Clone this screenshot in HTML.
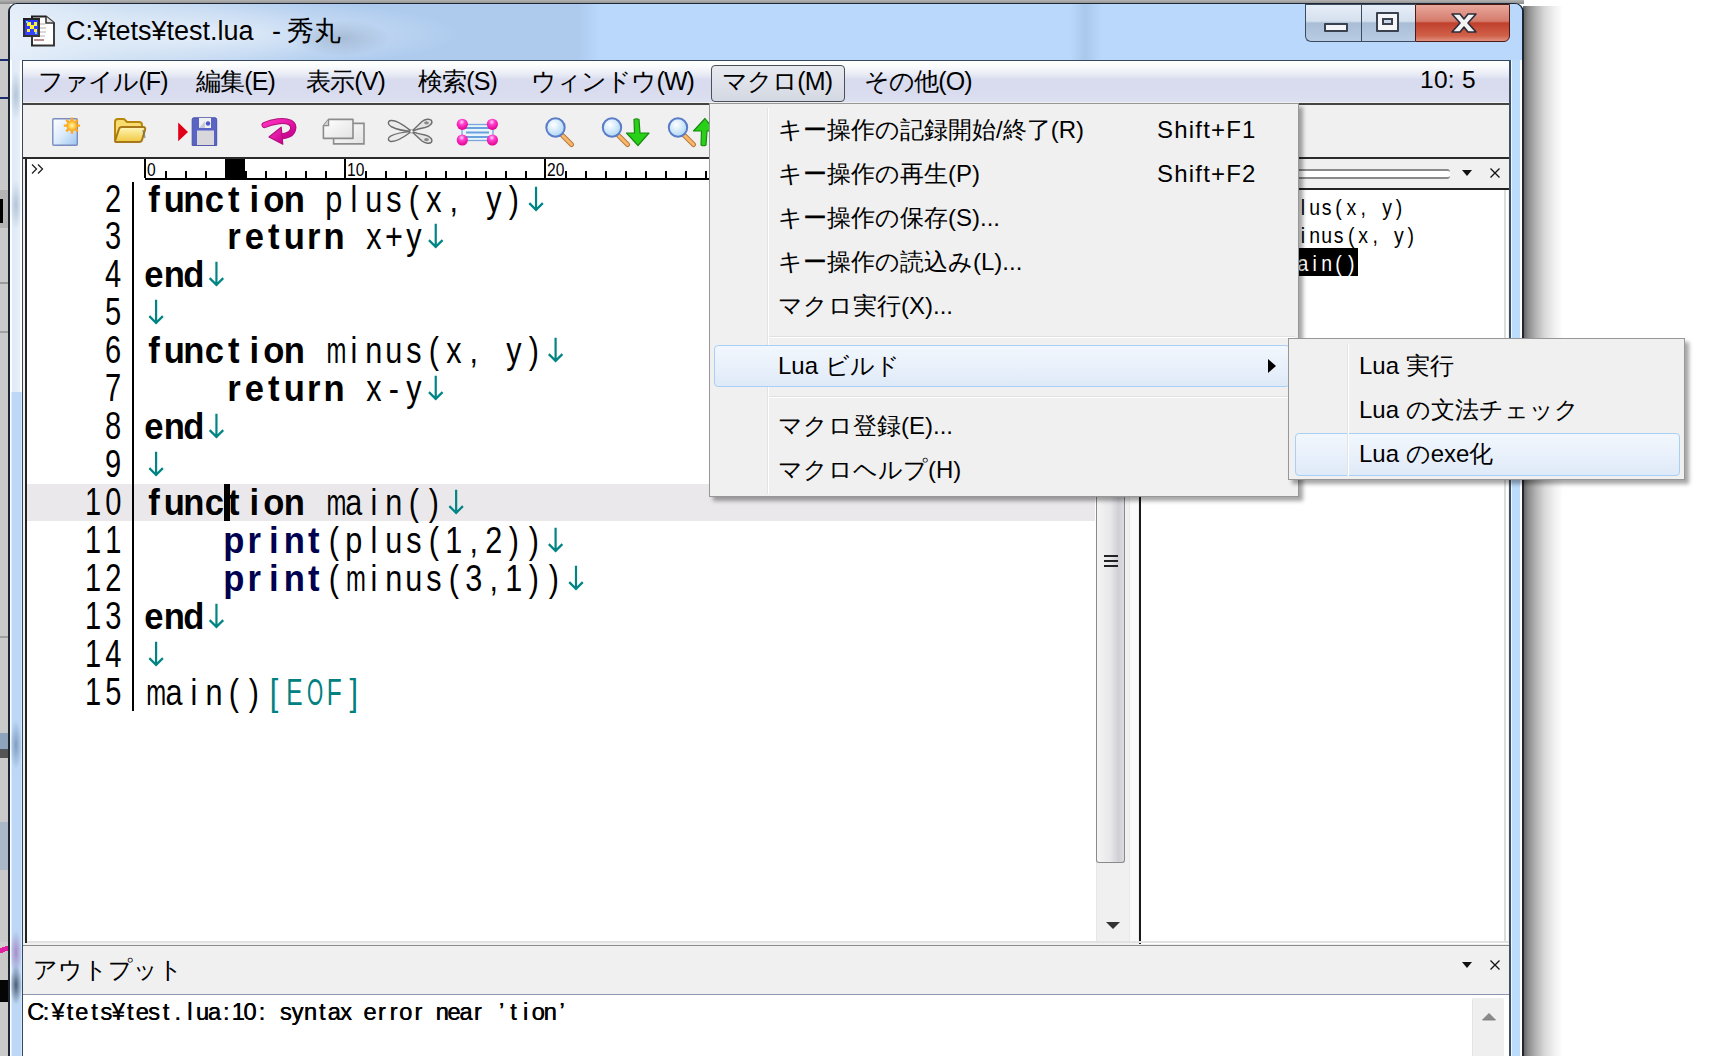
<!DOCTYPE html>
<html lang="ja">
<head>
<meta charset="utf-8">
<style>
*{margin:0;padding:0;box-sizing:border-box}
html,body{width:1730px;height:1056px;overflow:hidden;background:#fff;font-family:"Liberation Sans",sans-serif}
.a{position:absolute}
#bgleft{left:0;top:0;width:10px;height:1056px;background:#cacaca}
#bgtop{left:0;top:0;width:1524px;height:4px;background:linear-gradient(to bottom,#b4b4b4,#8a8a8a)}
#shadow{left:1523px;top:6px;width:40px;height:1056px;background:linear-gradient(to right,#5e5e5e 0px,#8a8a8a 5px,#b4b4b4 13px,#dadada 22px,#f2f2f2 32px,#fff 40px)}
#win{left:8px;top:3px;width:1516px;height:1100px;border:2px solid #1c2733;border-top-width:1px;border-radius:9px 9px 0 0;background:linear-gradient(to right,#fff 0,#fff 1px,#bcd8f6 2px,#bcd8f6 11px,#eef6ff 12px,#eef6ff 13px,#bcd8f6 13px)}
#tgrad{left:10px;top:4px;width:1512px;height:56px;border-radius:8px 8px 0 0;background:linear-gradient(to right,#e4eef9 0px,#c8dcf2 120px,#aecbee 300px,#aecbee 568px,#b9d8fb 590px,#b9d8fb 1060px,#a9c8ea 1075px,#b9d8fb 1092px,#b9d8fb 100%)}
#rglass{left:1509px;top:60px;width:13px;height:1000px;background:linear-gradient(to right,#3d5068 0,#3d5068 1.5px,#eef6ff 1.5px,#eef6ff 3px,#bcdcfc 3px,#bcdcfc 11px,#fff 11px)}
#client{left:22px;top:60px;width:1488px;height:1000px;background:#f0f0f0;border:1px solid #36485e;border-top-width:1.5px;border-bottom:none}
#menubar{left:23px;top:61px;width:1486px;height:41px;background:linear-gradient(to bottom,#ffffff 0%,#fbfcfd 12%,#e6e9f4 35%,#d8dcee 45%,#d8dcee 75%,#dde0f0 100%)}
.mi{position:absolute;top:63px;font-size:25px;line-height:36px;letter-spacing:-0.9px;color:#000;white-space:nowrap}
#mpress{left:711px;top:65px;width:134px;height:37px;border:1px solid #4a4f59;border-radius:4px;background:linear-gradient(to bottom,#e8eaf0,#d4d8e2)}
#toolbar{left:23px;top:103px;width:1486px;height:56px;background:#f0f0f0;border-top:2px solid #444;border-bottom:2px solid #2a2a2a}
#editor{left:25px;top:159px;width:1071px;height:784px;background:#fff;border-left:2px solid #222}
#ruler{left:145px;top:159px;width:951px;height:21px;border-bottom:2px solid #000}
#rcur{position:absolute;left:80px;top:0px;width:20px;height:19px;background:#000}
.tick{position:absolute;bottom:0;width:2px;background:#000}
.rnum{position:absolute;top:1px;font-family:"Liberation Sans",sans-serif;font-size:19px;line-height:19px;color:#000;transform-origin:0 0;transform:scaleX(0.82)}
#curline{left:27px;top:484px;width:1068px;height:37px;background:#ebe8eb}
#sep{left:132px;top:182px;width:2px;height:529px;background:#000}
.ln{position:absolute;left:0;width:120px;height:38px;text-align:right}
.code{position:absolute;font-family:"Liberation Sans",sans-serif;font-size:36px;line-height:38px;white-space:pre;transform-origin:0 0;transform:scaleX(0.85)}
.code i,.lnum i{display:inline-block;width:23.53px;text-align:center;font-style:normal}
.code i.ar{height:38px;vertical-align:top}
.code i.ar svg{display:block}
.lnum{position:absolute;font-family:"Liberation Sans",sans-serif;font-size:38px;line-height:38px;white-space:pre;transform-origin:0 0;transform:scaleX(0.85)}
.b{font-weight:bold}
.b i,.p i{transform:scaleX(1.13)}
.t{color:#008080}
.p{color:#000050;font-weight:bold}
#scroll{left:1096px;top:497px;width:34px;height:446px;background:#f0f0f0;border-left:1px solid #e6e6e6}
#thumb{left:1096px;top:497px;width:29px;height:366px;border:1px solid #8a8a8a;border-top:none;border-radius:0 0 3px 3px;background:linear-gradient(to right,#f4f4f4,#e8e8ea 50%,#cfcfd6 80%,#dcdce0)}
#rpane{left:1139px;top:159px;width:369px;height:785px;background:#fff;border-left:2px solid #1a1a1a}
#rhead{left:1141px;top:159px;width:368px;height:31px;background:#f0f0f0;border-bottom:2px solid #222}
#outhead{left:23px;top:945px;width:1486px;height:50px;background:#f0f0f0;border-top:1.5px solid #8a8a8a;border-bottom:1.5px solid #8c94b0}
#outbody{left:23px;top:995px;width:1486px;height:70px;background:#fff}
.popup{background:#f0f0f0;border:1px solid #979797;box-shadow:4px 4px 4px rgba(0,0,0,.35)}
.pt{position:absolute;font-size:24px;line-height:30px;margin-top:-0.5px;white-space:nowrap;color:#000}
.hl{position:absolute;border:1px solid #a8d0f6;border-radius:4px;background:linear-gradient(to bottom,#f2f7fd,#dfeaf8)}#ttext2{left:272px;top:15px;font-size:27px;line-height:32px;color:#000;white-space:nowrap;word-spacing:-1px}
#ticon{left:23px;top:15px;width:34px;height:32px}
#ttext{left:66px;top:15px;font-size:27px;line-height:32px;color:#000;white-space:nowrap}
#bmin{left:1305px;top:4px;width:56px;height:38px;border:1px solid #3b4a5e;border-right:none;border-radius:0 0 0 6px;background:linear-gradient(to bottom,#e6eef8 0%,#d5e0ee 45%,#a9bed6 50%,#b8cde4 100%)}
#bmax{left:1361px;top:4px;width:54px;height:38px;border:1px solid #3b4a5e;border-right:none;background:linear-gradient(to bottom,#e6eef8 0%,#d5e0ee 45%,#a9bed6 50%,#b8cde4 100%)}
#bclose{left:1415px;top:4px;width:95px;height:38px;border:1px solid #4a1a14;border-radius:0 0 6px 0;background:linear-gradient(to bottom,#e8a89c 0%,#d47b6c 45%,#c0402c 50%,#d06048 85%,#e09080 100%)}
#caret{left:224px;top:484px;width:6px;height:37px;background:#000}
.rl{position:absolute;left:1177px;font-family:"Liberation Sans",sans-serif;font-size:22px;line-height:28px;white-space:pre;transform-origin:0 0;transform:scaleX(0.85)}
.rl i,#outtext i{display:inline-block;width:14.118px;text-align:center;font-style:normal;transform:scaleX(1.18)}
.rl i{transform:scaleX(1.04)}
#outtitle{left:33px;top:953px;font-size:24px;line-height:34px;white-space:nowrap}
#outtext{text-shadow:0.5px 0 0 #000;left:28px;top:995px;font-family:"Liberation Sans",sans-serif;font-size:23.5px;line-height:34px;white-space:pre;transform-origin:0 0;transform:scaleX(0.85)}
#pop1{left:709px;top:103px;width:590px;height:394px}
#pop2{left:1288px;top:338px;width:397px;height:142px}

.code i.n1,.rl i.n1,#outtext i.n1{transform:scaleX(0.78)}
.code i.n2{transform:scaleX(0.68)}
.code i.n3{transform:scaleX(0.8)}
.lnum i{transform:scaleX(0.9)}

</style>
</head>
<body>
<div id="bgleft" class="a"></div>
<div id="bgtop" class="a"></div>
<div id="shadow" class="a"></div>
<div id="win" class="a"></div>
<div id="tgrad" class="a"></div>
<div id="ticon" class="a"><svg width="34" height="32" viewBox="0 0 34 32">
<path d="M9 1.5 H23 L31 8 V30.5 H9 Z" fill="#fff" stroke="#000" stroke-width="2"/>
<path d="M23 1.5 V8 H31" fill="#ddd" stroke="#000" stroke-width="1.5"/>
<path d="M14 9h8M14 13h9M14 17h9M14 21h8" stroke="#999" stroke-width="1"/>
<path d="M11 25h10" stroke="#722" stroke-width="1.3"/>
<rect x="1" y="4" width="15" height="17" fill="#0010ff" stroke="#000" stroke-width="2"/>
<path d="M4 7h4v3h3v-3h3v4h-3v3h3v3h-3v-3h-4v3h-3v-3h3v-3h-3z" fill="#ffee00"/>
<rect x="3" y="6" width="2" height="2" fill="#5cf"/><rect x="12" y="17" width="2" height="2" fill="#5cf"/>
</svg></div>
<div class="a" style="left:10px;top:4px;width:600px;height:56px;background:radial-gradient(ellipse 260px 36px at 190px 30px,rgba(255,255,255,.6),rgba(255,255,255,0))"></div>
<div class="a" style="left:280px;top:10px;width:120px;height:48px;background:radial-gradient(ellipse 50px 18px at 60px 28px,rgba(90,110,140,.28),rgba(90,110,140,0))"></div>
<div id="ttext" class="a">C:¥tets¥test.lua</div>
<div id="ttext2" class="a">- 秀丸</div>
<div id="tbtns" class="a">
 <div id="bmin" class="a"><div class="a" style="left:18px;top:18px;width:24px;height:9px;border:2px solid #3a4250;background:#f4f6f9;border-radius:1px"></div></div>
 <div id="bmax" class="a"><div class="a" style="left:14px;top:7px;width:23px;height:20px;border:2px solid #3a4250;background:#f4f6f9;border-radius:1px"><div class="a" style="left:4px;top:4px;width:11px;height:7px;border:2px solid #3a4250;background:#c8d6e8"></div></div></div>
 <div id="bclose" class="a"><svg class="a" style="left:33px;top:6px" width="30" height="24" viewBox="0 0 30 24"><path d="M3 3 L11 3 L15 8 L19 3 L27 3 L19 12 L27 21 L19 21 L15 16 L11 21 L3 21 L11 12 Z" fill="#f3f3f3" stroke="#2c2c3a" stroke-width="1.6" stroke-linejoin="round"/></svg></div>
</div>
<div class="a" style="left:0;top:59px;width:8px;height:2px;background:#1c2c70"></div>
<div class="a" style="left:0;top:97px;width:8px;height:2px;background:#1c2c70"></div>
<div class="a" style="left:0;top:190px;width:8px;height:38px;background:#b4b4b4"></div>
<div class="a" style="left:0;top:199px;width:3px;height:24px;background:#000"></div>
<div class="a" style="left:0;top:282px;width:8px;height:2px;background:#9a9a9a"></div>
<div class="a" style="left:0;top:331px;width:8px;height:2px;background:#a0a0a0"></div>
<div class="a" style="left:0;top:636px;width:8px;height:2px;background:#a0a0a0"></div>
<div class="a" style="left:0;top:733px;width:8px;height:16px;background:#8ea4bc"></div>
<div class="a" style="left:0;top:749px;width:8px;height:9px;background:#555"></div>
<div class="a" style="left:0;top:822px;width:8px;height:48px;background:#aab8c8"></div>
<div class="a" style="left:0;top:942px;width:8px;height:18px;background:linear-gradient(160deg,#d0d0d0 0,#d0d0d0 30%,#e020a0 30%,#e020a0 55%,#c8c8c8 55%)"></div>
<div class="a" style="left:0;top:980px;width:8px;height:22px;background:#050505"></div>
<div class="a" style="left:10px;top:60px;width:12px;height:332px;background:linear-gradient(to right,#fff 0,#fff 1.5px,#dfeaf6 1.5px,#e6effa 10px,#fff 10px)"></div>
<div class="a" style="left:10px;top:70px;width:12px;height:50px;background:radial-gradient(ellipse at center,rgba(120,150,180,.45),rgba(120,150,180,0) 70%)"></div>
<div class="a" style="left:10px;top:180px;width:12px;height:50px;background:radial-gradient(ellipse at center,rgba(120,150,180,.45),rgba(120,150,180,0) 70%)"></div>
<div class="a" style="left:10px;top:720px;width:12px;height:50px;background:radial-gradient(ellipse at center,rgba(80,110,150,.55),rgba(80,110,150,0) 70%)"></div>
<div class="a" style="left:10px;top:930px;width:12px;height:45px;background:radial-gradient(ellipse at center,rgba(150,80,160,.55),rgba(150,80,160,0) 70%)"></div>
<div class="a" style="left:10px;top:965px;width:12px;height:40px;background:radial-gradient(ellipse at center,rgba(30,40,60,.7),rgba(30,40,60,0) 70%)"></div>
<div id="client" class="a"></div>
<div id="rglass" class="a"></div>
<div id="menubar" class="a"></div>
<div id="mpress" class="a"></div>
<div class="mi" style="left:38px">ファイル(F)</div>
<div class="mi" style="left:196px">編集(E)</div>
<div class="mi" style="left:306px">表示(V)</div>
<div class="mi" style="left:418px">検索(S)</div>
<div class="mi" style="left:531px">ウィンドウ(W)</div>
<div class="mi" style="left:722px">マクロ(M)</div>
<div class="mi" style="left:864px">その他(O)</div>
<div class="mi" style="left:1420px;letter-spacing:0.3px;font-size:24.5px;top:62px">10: 5</div>
<div id="toolbar" class="a"></div>
<!-- toolbar icons -->
<svg class="a" style="left:50px;top:116px" width="32" height="32" viewBox="0 0 32 32">
 <defs><linearGradient id="gnew" x1="0" y1="0" x2="1" y2="1"><stop offset="0" stop-color="#ffffff"/><stop offset=".5" stop-color="#dcebfb"/><stop offset="1" stop-color="#9cc4f0"/></linearGradient>
 <radialGradient id="gsun"><stop offset="0" stop-color="#fff7b0"/><stop offset=".6" stop-color="#ffc840"/><stop offset="1" stop-color="#f7a21b"/></radialGradient></defs>
 <rect x="2.8" y="2.8" width="24.5" height="26.5" rx="1" fill="url(#gnew)" stroke="#7a8cc0" stroke-width="1.4"/>
 <circle cx="22" cy="9.6" r="5.5" fill="url(#gsun)"/>
 <path d="M22 1.5v3.5M22 14.2v3.5M13.8 9.6h3.5M26.6 9.6h3.5M16.3 3.9l2.4 2.4M25.3 12.9l2.4 2.4M16.3 15.3l2.4-2.4M25.3 6.3l2.4-2.4" stroke="#ffa820" stroke-width="2.4"/>
</svg>
<svg class="a" style="left:112px;top:116px" width="36" height="30" viewBox="0 0 36 30">
 <defs><linearGradient id="gfold" x1="0" y1="0" x2="0" y2="1"><stop offset="0" stop-color="#fff6b8"/><stop offset="1" stop-color="#f0c840"/></linearGradient></defs>
 <path d="M3 24 V6 Q3 3 6 3 H12 L15 6 H27 Q30 6 30 9 V12" fill="#f8dc70" stroke="#b8860b" stroke-width="2" stroke-linejoin="round"/>
 <path d="M3 25 L7 13 Q7.5 11 10 11 H31 Q34 11 33 14 L30 24 Q29.5 26 27 26 H5 Q3 26 3 25 Z" fill="url(#gfold)" stroke="#a87818" stroke-width="2" stroke-linejoin="round"/>
 <path d="M31 14 L33 22" stroke="#606878" stroke-width="1.5" opacity=".6"/>
</svg>
<svg class="a" style="left:176px;top:116px" width="44" height="32" viewBox="0 0 44 32">
 <path d="M2.2 6.5 L12 16 L2.2 25.2 Z" fill="#e00018"/>
 <path d="M16.2 3.5 Q16.2 1.8 18 1.8 H39 Q40.7 1.8 40.7 3.5 V29.4 H16.2 Z" fill="#5a64c4" stroke="#4a52a8" stroke-width="1"/>
 <path d="M23 2 H35 V12 H23 Z" fill="#f0f0f4"/>
 <path d="M23 12 L29 5 V12 Z" fill="#c8cad8"/>
 <circle cx="32" cy="7.5" r="2.2" fill="#4a58c8"/>
 <rect x="21" y="14.5" width="17" height="14.5" fill="#d8d8dc"/>
</svg>
<svg class="a" style="left:258px;top:116px" width="40" height="31" viewBox="0 0 40 31">
 <defs><linearGradient id="gundo" x1="0" y1="0" x2="1" y2="1"><stop offset="0" stop-color="#ff30c0"/><stop offset="1" stop-color="#c8008c"/></linearGradient></defs>
 <path d="M6.6 9 C14 5.5 26 3.5 32 6.5 C37.5 9.5 36 17.5 28 19.5 L23.5 20.5" fill="none" stroke="#b0107c" stroke-width="6.2" stroke-linecap="round"/>
 <path d="M6.6 9 C14 5.5 26 3.5 32 6.5 C37.5 9.5 36 17.5 28 19.5 L23.5 20.5" fill="none" stroke="url(#gundo)" stroke-width="4.2" stroke-linecap="round"/>
 <path d="M11 21 L23.2 11.2 L24.8 28.2 Z" fill="url(#gundo)" stroke="#b0107c" stroke-width="1.2" stroke-linejoin="round"/>
</svg>
<svg class="a" style="left:320px;top:116px" width="48" height="30" viewBox="0 0 48 30">
 <defs><linearGradient id="gcopy" x1="0" y1="0" x2="1" y2="1"><stop offset="0" stop-color="#ffffff"/><stop offset="1" stop-color="#e2e2e2"/></linearGradient></defs>
 <path d="M13.6 7.4 H44 V27.9 H13.6 Z" fill="url(#gcopy)" stroke="#8c8c8c" stroke-width="1.6"/>
 <path d="M3.4 9.7 L8.6 3.4 H33 V22.4 H3.4 Z" fill="url(#gcopy)" stroke="#8c8c8c" stroke-width="1.6" stroke-linejoin="round"/>
 <path d="M3.4 9.7 H8.6 V3.4" fill="#d0d0d0" stroke="#8c8c8c" stroke-width="1.2"/>
</svg>
<svg class="a" style="left:386px;top:116px" width="48" height="30" viewBox="0 0 48 30">
 <path d="M25.6 15.4 C20 11 12 4 5 4.5 C1.5 5 1.5 8.5 5 10.5 C10 13 18 15 25.6 15.4 Z" fill="#ececec" stroke="#6e6e6e" stroke-width="1.4" stroke-linejoin="round"/>
 <path d="M25.6 15.4 C20 19.5 12 26 5 25.5 C1.5 25 1.5 21.5 5 19.8 C10 17.5 18 16 25.6 15.4 Z" fill="#ececec" stroke="#6e6e6e" stroke-width="1.4" stroke-linejoin="round"/>
 <path d="M25.6 15.4 L36 5.5 C39 3 44 2.5 45.5 4.5 C47 7 44 10.5 39 11.5 C33 12.5 29 14 25.6 15.4 Z" fill="#e4e4e4" stroke="#6e6e6e" stroke-width="1.4" stroke-linejoin="round"/>
 <path d="M25.6 15.4 L36 25 C39 27.5 44 28 45.5 26 C47 23.5 44 20 39 19 C33 18 29 16.8 25.6 15.4 Z" fill="#e4e4e4" stroke="#6e6e6e" stroke-width="1.4" stroke-linejoin="round"/>
 <ellipse cx="40.5" cy="6.8" rx="2.4" ry="1.6" fill="#8a8a8a"/><ellipse cx="40.5" cy="23.6" rx="2.4" ry="1.6" fill="#8a8a8a"/>
 <circle cx="25.6" cy="15.4" r="1.6" fill="#fff" stroke="#777" stroke-width=".8"/>
</svg>
<svg class="a" style="left:454px;top:114px" width="48" height="34" viewBox="0 0 48 34">
 <defs><radialGradient id="gball" cx=".45" cy=".3" r=".7"><stop offset="0" stop-color="#ffe0f8"/><stop offset=".35" stop-color="#ff40d0"/><stop offset="1" stop-color="#e0008c"/></radialGradient></defs>
 <rect x="8" y="10.5" width="31" height="16" fill="#eaf4fc" stroke="#7aa8dc" stroke-width="1.3"/>
 <path d="M12 14h23M12 18.5h23M12 23h23" stroke="#6aa0dc" stroke-width="2"/>
 <circle cx="8.3" cy="10.3" r="5.6" fill="url(#gball)"/><circle cx="38.4" cy="10.3" r="5.6" fill="url(#gball)"/>
 <circle cx="8.3" cy="26" r="5.6" fill="url(#gball)"/><circle cx="38.4" cy="26" r="5.6" fill="url(#gball)"/>
</svg>
<svg class="a" style="left:543px;top:116px" width="34" height="32" viewBox="0 0 34 32">
 <defs><radialGradient id="glens" cx=".4" cy=".35" r=".7"><stop offset="0" stop-color="#ffffff"/><stop offset="1" stop-color="#a8d4f4"/></radialGradient></defs>
 <path d="M19.5 19.5 L28.5 28.5" stroke="#b87840" stroke-width="5" stroke-linecap="round"/>
 <path d="M19.5 19.5 L28.5 28.5" stroke="#f8b868" stroke-width="3" stroke-linecap="round"/>
 <circle cx="12.5" cy="11.5" r="9.2" fill="url(#glens)" stroke="#5a7cc8" stroke-width="2"/>
</svg>
<svg class="a" style="left:599px;top:116px" width="54" height="32" viewBox="0 0 54 32">
 <path d="M19.5 19.5 L28.5 28.5" stroke="#b87840" stroke-width="5" stroke-linecap="round"/>
 <path d="M19.5 19.5 L28.5 28.5" stroke="#f8b868" stroke-width="3" stroke-linecap="round"/>
 <circle cx="13" cy="11.5" r="9.2" fill="url(#glens)" stroke="#5a7cc8" stroke-width="2"/>
 <path d="M35 3.5 Q37.5 2 40 3.5 L41 17 H50 L39 29.5 L27.5 17 H35.5 Z" fill="#28d018" stroke="#188a10" stroke-width="1.2" stroke-linejoin="round"/>
</svg>
<svg class="a" style="left:665px;top:116px" width="44" height="32" viewBox="0 0 44 32">
 <path d="M19.5 19.5 L28.5 28.5" stroke="#b87840" stroke-width="5" stroke-linecap="round"/>
 <path d="M19.5 19.5 L28.5 28.5" stroke="#f8b868" stroke-width="3" stroke-linecap="round"/>
 <circle cx="13" cy="11.5" r="9.2" fill="url(#glens)" stroke="#5a7cc8" stroke-width="2"/>
 <path d="M36 29 Q38.5 30.5 41 29 L42 15 H50 L40 2.5 L28.5 15 H36.5 Z" fill="#28d018" stroke="#188a10" stroke-width="1.2" stroke-linejoin="round"/>
</svg>
<div id="editor" class="a"></div>
<div id="curline" class="a"></div>
<svg id="gtgt" class="a" style="left:31px;top:163px" width="14" height="12" viewBox="0 0 14 12"><path d="M1 1.5L5.5 6L1 10.5M7 1.5L11.5 6L7 10.5" fill="none" stroke="#222" stroke-width="1.3"/></svg>
<div id="caret" class="a"></div>
<div id="ruler" class="a"><div class="tick" style="left:-1px;height:19px"></div><div class="rnum" style="left:2px">0</div><div class="tick" style="left:20px;height:7px"></div><div class="tick" style="left:40px;height:7px"></div><div class="tick" style="left:60px;height:7px"></div><div class="tick" style="left:80px;height:7px"></div><div class="tick" style="left:100px;height:7px"></div><div class="tick" style="left:120px;height:7px"></div><div class="tick" style="left:140px;height:7px"></div><div class="tick" style="left:160px;height:7px"></div><div class="tick" style="left:180px;height:7px"></div><div class="tick" style="left:199px;height:19px"></div><div class="rnum" style="left:202px">10</div><div class="tick" style="left:220px;height:7px"></div><div class="tick" style="left:240px;height:7px"></div><div class="tick" style="left:260px;height:7px"></div><div class="tick" style="left:280px;height:7px"></div><div class="tick" style="left:300px;height:7px"></div><div class="tick" style="left:320px;height:7px"></div><div class="tick" style="left:340px;height:7px"></div><div class="tick" style="left:360px;height:7px"></div><div class="tick" style="left:380px;height:7px"></div><div class="tick" style="left:399px;height:19px"></div><div class="rnum" style="left:402px">20</div><div class="tick" style="left:420px;height:7px"></div><div class="tick" style="left:440px;height:7px"></div><div class="tick" style="left:460px;height:7px"></div><div class="tick" style="left:480px;height:7px"></div><div class="tick" style="left:500px;height:7px"></div><div class="tick" style="left:520px;height:7px"></div><div class="tick" style="left:540px;height:7px"></div><div class="tick" style="left:560px;height:7px"></div><div class="tick" style="left:580px;height:7px"></div><div class="tick" style="left:599px;height:19px"></div><div class="rnum" style="left:602px">30</div><div class="tick" style="left:620px;height:7px"></div><div class="tick" style="left:640px;height:7px"></div><div class="tick" style="left:660px;height:7px"></div><div class="tick" style="left:680px;height:7px"></div><div class="tick" style="left:700px;height:7px"></div><div class="tick" style="left:720px;height:7px"></div><div class="tick" style="left:740px;height:7px"></div><div class="tick" style="left:760px;height:7px"></div><div class="tick" style="left:780px;height:7px"></div><div class="tick" style="left:799px;height:19px"></div><div class="rnum" style="left:802px">40</div><div class="tick" style="left:820px;height:7px"></div><div class="tick" style="left:840px;height:7px"></div><div class="tick" style="left:860px;height:7px"></div><div class="tick" style="left:880px;height:7px"></div><div class="tick" style="left:900px;height:7px"></div><div class="tick" style="left:920px;height:7px"></div><div class="tick" style="left:940px;height:7px"></div><div id="rcur"></div></div>
<div class="lnum" style="top:179.50px;left:103px"><i>2</i></div><div class="code" style="top:180.50px;left:143.5px"><span class="b"><i>f</i><i>u</i><i>n</i><i>c</i><i>t</i><i>i</i><i>o</i><i>n</i></span><i>&nbsp;</i><i>p</i><i>l</i><i>u</i><i>s</i><i>(</i><i>x</i><i>,</i><i>&nbsp;</i><i>y</i><i>)</i><span class="t"><i class="ar"><svg width="23.53" height="38" viewBox="0 0 20 38" preserveAspectRatio="none" style="overflow:visible"><path d="M12.1 5.7V29.7M5.3 22.1L12.1 28.9L18.9 22.1" fill="none" stroke="#008484" stroke-width="2.2"/></svg></i></span></div>
<div class="lnum" style="top:217.45px;left:103px"><i>3</i></div><div class="code" style="top:218.45px;left:143.5px"><i>&nbsp;</i><i>&nbsp;</i><i>&nbsp;</i><i>&nbsp;</i><span class="b"><i>r</i><i>e</i><i>t</i><i>u</i><i>r</i><i>n</i></span><i>&nbsp;</i><i>x</i><i>+</i><i>y</i><span class="t"><i class="ar"><svg width="23.53" height="38" viewBox="0 0 20 38" preserveAspectRatio="none" style="overflow:visible"><path d="M12.1 5.7V29.7M5.3 22.1L12.1 28.9L18.9 22.1" fill="none" stroke="#008484" stroke-width="2.2"/></svg></i></span></div>
<div class="lnum" style="top:255.40px;left:103px"><i>4</i></div><div class="code" style="top:256.40px;left:143.5px"><span class="b"><i>e</i><i>n</i><i>d</i></span><span class="t"><i class="ar"><svg width="23.53" height="38" viewBox="0 0 20 38" preserveAspectRatio="none" style="overflow:visible"><path d="M12.1 5.7V29.7M5.3 22.1L12.1 28.9L18.9 22.1" fill="none" stroke="#008484" stroke-width="2.2"/></svg></i></span></div>
<div class="lnum" style="top:293.35px;left:103px"><i>5</i></div><div class="code" style="top:294.35px;left:143.5px"><span class="t"><i class="ar"><svg width="23.53" height="38" viewBox="0 0 20 38" preserveAspectRatio="none" style="overflow:visible"><path d="M12.1 5.7V29.7M5.3 22.1L12.1 28.9L18.9 22.1" fill="none" stroke="#008484" stroke-width="2.2"/></svg></i></span></div>
<div class="lnum" style="top:331.30px;left:103px"><i>6</i></div><div class="code" style="top:332.30px;left:143.5px"><span class="b"><i>f</i><i>u</i><i>n</i><i>c</i><i>t</i><i>i</i><i>o</i><i>n</i></span><i>&nbsp;</i><i class="n1">m</i><i>i</i><i>n</i><i>u</i><i>s</i><i>(</i><i>x</i><i>,</i><i>&nbsp;</i><i>y</i><i>)</i><span class="t"><i class="ar"><svg width="23.53" height="38" viewBox="0 0 20 38" preserveAspectRatio="none" style="overflow:visible"><path d="M12.1 5.7V29.7M5.3 22.1L12.1 28.9L18.9 22.1" fill="none" stroke="#008484" stroke-width="2.2"/></svg></i></span></div>
<div class="lnum" style="top:369.25px;left:103px"><i>7</i></div><div class="code" style="top:370.25px;left:143.5px"><i>&nbsp;</i><i>&nbsp;</i><i>&nbsp;</i><i>&nbsp;</i><span class="b"><i>r</i><i>e</i><i>t</i><i>u</i><i>r</i><i>n</i></span><i>&nbsp;</i><i>x</i><i>-</i><i>y</i><span class="t"><i class="ar"><svg width="23.53" height="38" viewBox="0 0 20 38" preserveAspectRatio="none" style="overflow:visible"><path d="M12.1 5.7V29.7M5.3 22.1L12.1 28.9L18.9 22.1" fill="none" stroke="#008484" stroke-width="2.2"/></svg></i></span></div>
<div class="lnum" style="top:407.20px;left:103px"><i>8</i></div><div class="code" style="top:408.20px;left:143.5px"><span class="b"><i>e</i><i>n</i><i>d</i></span><span class="t"><i class="ar"><svg width="23.53" height="38" viewBox="0 0 20 38" preserveAspectRatio="none" style="overflow:visible"><path d="M12.1 5.7V29.7M5.3 22.1L12.1 28.9L18.9 22.1" fill="none" stroke="#008484" stroke-width="2.2"/></svg></i></span></div>
<div class="lnum" style="top:445.15px;left:103px"><i>9</i></div><div class="code" style="top:446.15px;left:143.5px"><span class="t"><i class="ar"><svg width="23.53" height="38" viewBox="0 0 20 38" preserveAspectRatio="none" style="overflow:visible"><path d="M12.1 5.7V29.7M5.3 22.1L12.1 28.9L18.9 22.1" fill="none" stroke="#008484" stroke-width="2.2"/></svg></i></span></div>
<div class="lnum" style="top:483.10px;left:83px"><i>1</i><i>0</i></div><div class="code" style="top:484.10px;left:143.5px"><span class="b"><i>f</i><i>u</i><i>n</i><i>c</i><i>t</i><i>i</i><i>o</i><i>n</i></span><i>&nbsp;</i><i class="n1">m</i><i>a</i><i>i</i><i>n</i><i>(</i><i>)</i><span class="t"><i class="ar"><svg width="23.53" height="38" viewBox="0 0 20 38" preserveAspectRatio="none" style="overflow:visible"><path d="M12.1 5.7V29.7M5.3 22.1L12.1 28.9L18.9 22.1" fill="none" stroke="#008484" stroke-width="2.2"/></svg></i></span></div>
<div class="lnum" style="top:521.05px;left:83px"><i>1</i><i>1</i></div><div class="code" style="top:522.05px;left:143.5px"><i>&nbsp;</i><i>&nbsp;</i><i>&nbsp;</i><i>&nbsp;</i><span class="p"><i>p</i><i>r</i><i>i</i><i>n</i><i>t</i></span><i>(</i><i>p</i><i>l</i><i>u</i><i>s</i><i>(</i><i>1</i><i>,</i><i>2</i><i>)</i><i>)</i><span class="t"><i class="ar"><svg width="23.53" height="38" viewBox="0 0 20 38" preserveAspectRatio="none" style="overflow:visible"><path d="M12.1 5.7V29.7M5.3 22.1L12.1 28.9L18.9 22.1" fill="none" stroke="#008484" stroke-width="2.2"/></svg></i></span></div>
<div class="lnum" style="top:559.00px;left:83px"><i>1</i><i>2</i></div><div class="code" style="top:560.00px;left:143.5px"><i>&nbsp;</i><i>&nbsp;</i><i>&nbsp;</i><i>&nbsp;</i><span class="p"><i>p</i><i>r</i><i>i</i><i>n</i><i>t</i></span><i>(</i><i class="n1">m</i><i>i</i><i>n</i><i>u</i><i>s</i><i>(</i><i>3</i><i>,</i><i>1</i><i>)</i><i>)</i><span class="t"><i class="ar"><svg width="23.53" height="38" viewBox="0 0 20 38" preserveAspectRatio="none" style="overflow:visible"><path d="M12.1 5.7V29.7M5.3 22.1L12.1 28.9L18.9 22.1" fill="none" stroke="#008484" stroke-width="2.2"/></svg></i></span></div>
<div class="lnum" style="top:596.95px;left:83px"><i>1</i><i>3</i></div><div class="code" style="top:597.95px;left:143.5px"><span class="b"><i>e</i><i>n</i><i>d</i></span><span class="t"><i class="ar"><svg width="23.53" height="38" viewBox="0 0 20 38" preserveAspectRatio="none" style="overflow:visible"><path d="M12.1 5.7V29.7M5.3 22.1L12.1 28.9L18.9 22.1" fill="none" stroke="#008484" stroke-width="2.2"/></svg></i></span></div>
<div class="lnum" style="top:634.90px;left:83px"><i>1</i><i>4</i></div><div class="code" style="top:635.90px;left:143.5px"><span class="t"><i class="ar"><svg width="23.53" height="38" viewBox="0 0 20 38" preserveAspectRatio="none" style="overflow:visible"><path d="M12.1 5.7V29.7M5.3 22.1L12.1 28.9L18.9 22.1" fill="none" stroke="#008484" stroke-width="2.2"/></svg></i></span></div>
<div class="lnum" style="top:672.85px;left:83px"><i>1</i><i>5</i></div><div class="code" style="top:673.85px;left:143.5px"><i class="n1">m</i><i>a</i><i>i</i><i>n</i><i>(</i><i>)</i><span class="t"><i>[</i><i class="n3">E</i><i class="n2">O</i><i class="n3">F</i><i>]</i></span></div>
<div id="sep" class="a"></div>
<div id="scroll" class="a"></div>
<div id="thumb" class="a"><div class="a" style="left:7px;top:58px;width:14px;height:3px;border-top:2px solid #222"></div><div class="a" style="left:7px;top:63px;width:14px;height:3px;border-top:2px solid #222"></div><div class="a" style="left:7px;top:68px;width:14px;height:3px;border-top:2px solid #222"></div></div>
<svg class="a" style="left:1105px;top:921px" width="16" height="9" viewBox="0 0 16 9"><path d="M1 1 H15 L8 8 Z" fill="#333"/></svg>
<div id="rpane" class="a"></div>
<div class="a" style="left:1129px;top:497px;width:9px;height:446px;background:#fafafa;border-left:1px solid #e8e8e8"></div>
<div class="a" style="left:1504px;top:190px;width:2px;height:753px;background:#dcdcdc"></div>
<div class="a" style="left:27px;top:941px;width:1482px;height:2px;background:#e2e2e2"></div>
<div id="rhead" class="a"></div>
<div class="a" style="left:1141px;top:169px;width:309px;height:10px;border-top:2px solid #8a8a8a;border-bottom:2px solid #8a8a8a;background:#fff;border-radius:0 3px 3px 0"></div>
<svg class="a" style="left:1461px;top:169px" width="12" height="8" viewBox="0 0 12 8"><path d="M1 1 H11 L6 7 Z" fill="#111"/></svg>
<svg class="a" style="left:1489px;top:167px" width="12" height="12" viewBox="0 0 12 12"><path d="M1.5 1.5 L10.5 10.5 M10.5 1.5 L1.5 10.5" stroke="#111" stroke-width="1.3"/></svg>
<div class="rl" style="top:194px"><i>f</i><i>u</i><i>n</i><i>c</i><i>t</i><i>i</i><i>o</i><i>n</i><i>&nbsp;</i><i>p</i><i>l</i><i>u</i><i>s</i><i>(</i><i>x</i><i>,</i><i>&nbsp;</i><i>y</i><i>)</i></div>
<div class="a" style="left:1177px;top:248px;width:181px;height:28px;background:#000"></div>
<div class="rl" style="top:222px"><i>f</i><i>u</i><i>n</i><i>c</i><i>t</i><i>i</i><i>o</i><i>n</i><i>&nbsp;</i><i class="n1">m</i><i>i</i><i>n</i><i>u</i><i>s</i><i>(</i><i>x</i><i>,</i><i>&nbsp;</i><i>y</i><i>)</i></div>
<div class="rl" style="top:250px;color:#fff"><i>f</i><i>u</i><i>n</i><i>c</i><i>t</i><i>i</i><i>o</i><i>n</i><i>&nbsp;</i><i class="n1">m</i><i>a</i><i>i</i><i>n</i><i>(</i><i>)</i></div>
<div id="outhead" class="a"></div>
<div id="outtitle" class="a">アウトプット</div>
<svg class="a" style="left:1461px;top:961px" width="12" height="8" viewBox="0 0 12 8"><path d="M1 1 H11 L6 7 Z" fill="#111"/></svg>
<svg class="a" style="left:1489px;top:959px" width="12" height="12" viewBox="0 0 12 12"><path d="M1.5 1.5 L10.5 10.5 M10.5 1.5 L1.5 10.5" stroke="#111" stroke-width="1.3"/></svg>
<div id="outbody" class="a"></div>
<div id="outtext" class="a"><i class="n3">C</i><i>:</i><i class="n3">¥</i><i>t</i><i>e</i><i>t</i><i>s</i><i class="n3">¥</i><i>t</i><i>e</i><i>s</i><i>t</i><i>.</i><i>l</i><i>u</i><i>a</i><i>:</i><i>1</i><i>0</i><i>:</i><i>&nbsp;</i><i>s</i><i>y</i><i>n</i><i>t</i><i>a</i><i>x</i><i>&nbsp;</i><i>e</i><i>r</i><i>r</i><i>o</i><i>r</i><i>&nbsp;</i><i>n</i><i>e</i><i>a</i><i>r</i><i>&nbsp;</i><i>’</i><i>t</i><i>i</i><i>o</i><i>n</i><i>’</i></div>
<div class="a" style="left:1472px;top:998px;width:32px;height:70px;background:#efefef;border-left:1px solid #e4e4e4;border-radius:2px 2px 0 0"></div>
<svg class="a" style="left:1481px;top:1011px" width="16" height="10" viewBox="0 0 16 10"><path d="M1.5 9 L8 2.5 L14.5 9 Z" fill="#8a8a8a" stroke="#777" stroke-width=".8"/></svg>
<!-- popup -->
<div id="pop1" class="a popup"></div>
<div class="a" style="left:767px;top:108px;width:2px;height:386px;border-left:1px solid #e2e3e3;border-right:1px solid #fff"></div>
<div class="a" style="left:769px;top:336px;width:526px;height:2px;border-top:1px solid #e0e0e0;border-bottom:1px solid #fff"></div>
<div class="a" style="left:769px;top:396px;width:526px;height:2px;border-top:1px solid #e0e0e0;border-bottom:1px solid #fff"></div>
<div class="hl" style="left:714px;top:345px;width:576px;height:42px"></div>
<div class="pt" style="left:778px;top:115px">キー操作の記録開始/終了(R)</div>
<div class="pt" style="left:1157px;top:115px;letter-spacing:1.2px">Shift+F1</div>
<div class="pt" style="left:778px;top:159px">キー操作の再生(P)</div>
<div class="pt" style="left:1157px;top:159px;letter-spacing:1.2px">Shift+F2</div>
<div class="pt" style="left:778px;top:203px">キー操作の保存(S)...</div>
<div class="pt" style="left:778px;top:247px">キー操作の読込み(L)...</div>
<div class="pt" style="left:778px;top:291px">マクロ実行(X)...</div>
<div class="pt" style="left:778px;top:351px">Lua ビルド</div>
<svg class="a" style="left:1267px;top:358px" width="10" height="16" viewBox="0 0 10 16"><path d="M1 1 L9 8 L1 15 Z" fill="#000"/></svg>
<div class="pt" style="left:778px;top:411px">マクロ登録(E)...</div>
<div class="pt" style="left:778px;top:455px">マクロヘルプ(H)</div>
<div id="pop2" class="a popup"></div>
<div class="hl" style="left:1295px;top:433px;width:385px;height:43px"></div>
<div class="a" style="left:1347px;top:344px;width:2px;height:132px;border-left:1px solid #e2e3e3;border-right:1px solid #fff"></div>
<div class="pt" style="left:1359px;top:351px">Lua 実行</div>
<div class="pt" style="left:1359px;top:395px">Lua の文法チェック</div>
<div class="pt" style="left:1359px;top:439px">Lua のexe化</div>
</body>
</html>
